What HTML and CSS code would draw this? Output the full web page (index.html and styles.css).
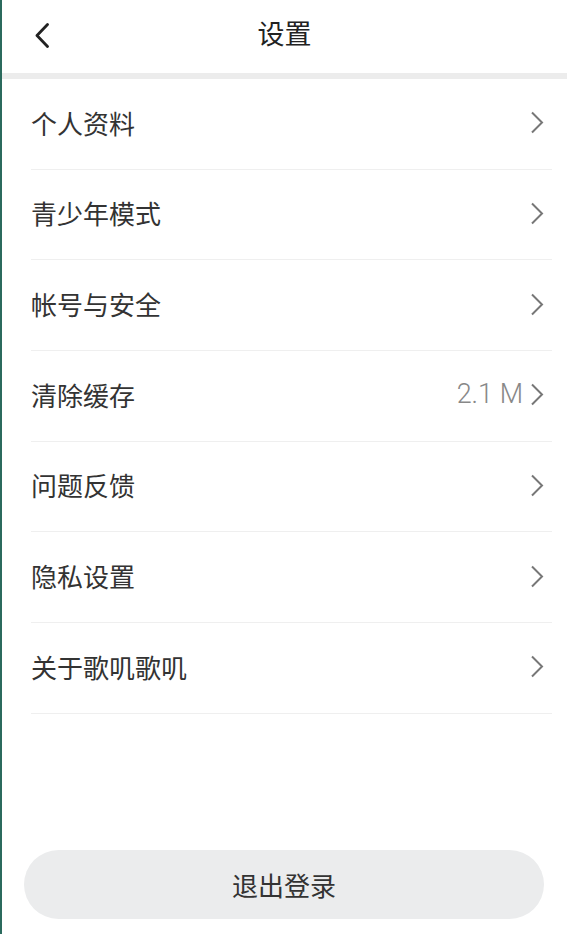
FILE: index.html
```html
<!DOCTYPE html>
<html lang="zh-CN">
<head>
<meta charset="utf-8">
<title>设置</title>
<link rel="stylesheet" href="styles.css">
</head>
<body>
<div class="app">
  <header class="header">
    <button class="back" aria-label="返回">
      <svg width="14" height="25" viewBox="0 0 14 25"><polyline points="12.5,1.5 2,12.5 12.5,23.5" fill="none" stroke="#222" stroke-width="2.8" stroke-linecap="round" stroke-linejoin="round"/></svg>
    </button>
    <h1 class="title">设置</h1>
    <span></span>
  </header>
  <div class="bar"></div>
  <ul class="list">
    <li class="row"><span class="label">个人资料</span><span class="right"><svg class="chev" width="14" height="23" viewBox="0 0 14 23"><polyline points="2,1.5 12,11.5 2,21.5" fill="none" stroke="#777" stroke-width="2"/></svg></span></li>
    <li class="row"><span class="label">青少年模式</span><span class="right"><svg class="chev" width="14" height="23" viewBox="0 0 14 23"><polyline points="2,1.5 12,11.5 2,21.5" fill="none" stroke="#777" stroke-width="2"/></svg></span></li>
    <li class="row"><span class="label">帐号与安全</span><span class="right"><svg class="chev" width="14" height="23" viewBox="0 0 14 23"><polyline points="2,1.5 12,11.5 2,21.5" fill="none" stroke="#777" stroke-width="2"/></svg></span></li>
    <li class="row"><span class="label">清除缓存</span><span class="right"><span class="value">2.1 M</span><svg class="chev" width="14" height="23" viewBox="0 0 14 23"><polyline points="2,1.5 12,11.5 2,21.5" fill="none" stroke="#777" stroke-width="2"/></svg></span></li>
    <li class="row"><span class="label">问题反馈</span><span class="right"><svg class="chev" width="14" height="23" viewBox="0 0 14 23"><polyline points="2,1.5 12,11.5 2,21.5" fill="none" stroke="#777" stroke-width="2"/></svg></span></li>
    <li class="row"><span class="label">隐私设置</span><span class="right"><svg class="chev" width="14" height="23" viewBox="0 0 14 23"><polyline points="2,1.5 12,11.5 2,21.5" fill="none" stroke="#777" stroke-width="2"/></svg></span></li>
    <li class="row"><span class="label">关于歌叽歌叽</span><span class="right"><svg class="chev" width="14" height="23" viewBox="0 0 14 23"><polyline points="2,1.5 12,11.5 2,21.5" fill="none" stroke="#777" stroke-width="2"/></svg></span></li>
  </ul>
  <div class="spacer"></div>
  <button class="logout">退出登录</button>
</div>
</body>
</html>
```
FILE: styles.css
```css
* { box-sizing: border-box; }
html, body { margin: 0; padding: 0; background: #fff; }
body {
  font-family: "Noto Sans CJK SC", "Noto Sans", Roboto, sans-serif;
  color: #333;
}
.app {
  height: 934px;
  border-left: 2px solid #2b6a5d;
  display: flex;
  flex-direction: column;
}
.header {
  height: 73px;
  display: grid;
  grid-template-columns: 1fr auto 1fr;
  align-items: center;
}
.back {
  justify-self: start;
  margin-left: 33px;
  margin-top: -2px;
  padding: 0;
  border: 0;
  background: none;
  display: flex;
}
.title {
  margin: 0;
  font-size: 27px;
  font-weight: 400;
  color: #222;
  line-height: 1;
  margin-top: -8px;
}
.bar {
  height: 6px;
  background: #ececec;
}
.list {
  list-style: none;
  margin: 0 15px 0 29px;
  padding: 0;
}
.row {
  height: 90.67px;
  border-bottom: 1px solid #efefef;
  display: flex;
  align-items: center;
  justify-content: space-between;
  padding-bottom: 2px;
}
.label {
  font-size: 26px;
  line-height: 1;
  color: #333;
}
.right {
  display: flex;
  align-items: center;
  gap: 7px;
  margin-right: 8px;
}
.value {
  font-family: Roboto, "Noto Sans", sans-serif;
  font-size: 27px;
  font-weight: 300;
  line-height: 1;
  color: #888;
}
.chev { display: block; }
.spacer { flex: 1; }
.logout {
  margin: 0 23px 15px 22px;
  height: 69px;
  border: 0;
  border-radius: 35px;
  background: #ebeced;
  font-family: "Noto Sans CJK SC", sans-serif;
  font-size: 26px;
  color: #333;
  padding: 0;
}
```
